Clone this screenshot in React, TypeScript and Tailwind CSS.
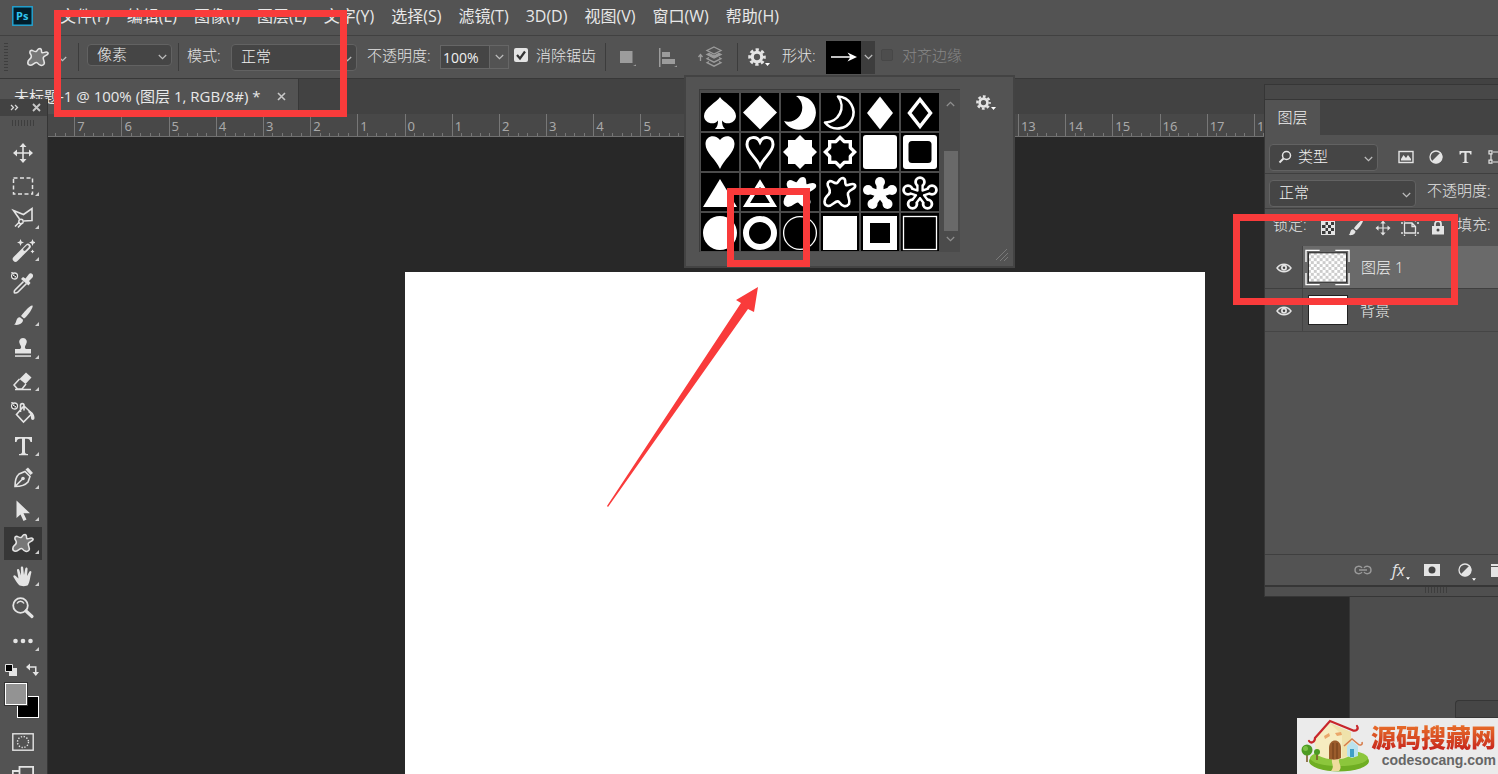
import { useState } from "react";
import type { ReactNode } from "react";

const menus = ["文件(F)", "编辑(E)", "图像(I)", "图层(L)", "文字(Y)", "选择(S)", "滤镜(T)", "3D(D)", "视图(V)", "窗口(W)", "帮助(H)"];

const rulerMarks = [8, 7, 6, 5, 4, 3, 2, 1, 0, 1, 2, 3, 4, 5, 6, 7, 8, 9, 10, 11, 12, 13, 14, 15, 16, 17, 18];

const BLOB = "M9 8C12 8 13 11 16 10C18 9 18 5 22 5C26 6 23 10 25 12C28 13 31 9 34 12C36 16 28 16 27 20C26 24 30 27 28 31C25 35 21 33 18 29C15 26 12 33 7 33C2 32 3 26 6 23C10 20 9 17 8 15C6 12 6 9 9 8Z";
const SPADE = "M19 4C22 9 35 15 35 23C35 30 25 33 21 27.500C21 32 22 34 24 36H14C16 34 17 32 17 27.500C13 33 3 30 3 23C3 15 16 9 19 4Z";
const HEART = "M19 36C15 26 4.500 20 4.500 11C4.500 2 15 1 19 7C23 1 33.500 2 33.500 11C33.500 20 23 26 19 36Z";
const MOON = "M15 3A17 17 0 1 1 3 28A14 14 0 0 0 15 3Z";
const ARMS = "M19 21V9M19 21L31 17M19 21L26.500 31M19 21L11.500 31M19 21L7 17";

const EightStar = ({ k }: { k: number }) => (
  <>
    <rect x={19 - 12 * k} y={19 - 12 * k} width={24 * k} height={24 * k} />
    <rect x={19 - 12 * k} y={19 - 12 * k} width={24 * k} height={24 * k} transform="rotate(45 19 19)" />
  </>
);

const Flower = ({ color, stem, bulb }: { color: string; stem: number; bulb: number }) => (
  <g fill={color}>
    <path d={ARMS} stroke={color} strokeWidth={stem} />
    <circle cx="19" cy="9" r={bulb} />
    <circle cx="31" cy="17" r={bulb} />
    <circle cx="26.500" cy="31" r={bulb} />
    <circle cx="11.500" cy="31" r={bulb} />
    <circle cx="7" cy="17" r={bulb} />
    <circle cx="19" cy="21" r={bulb} />
  </g>
);

const shapes: { name: string; art: ReactNode }[] = [
  { name: "黑桃", art: <path d={SPADE} /> },
  { name: "方块", art: <path d="M19 2.500L36 19.500L19 36.500L2 19.500Z" /> },
  { name: "新月", art: <path d={MOON} /> },
  { name: "新月边框", art: <path d="M17 3.500A16 16 0 1 1 4 29.500A16 16 0 0 0 17 3.500Z" fill="none" stroke="#fff" strokeWidth="2.600" strokeLinejoin="round" /> },
  { name: "菱形", art: <path d="M19 3.500L32 20L19 36.500L6 20Z" /> },
  { name: "菱形边框", art: <path d="M19 6.500L29.500 20L19 33.500L8.500 20Z" fill="none" stroke="#fff" strokeWidth="3.500" /> },
  { name: "红心", art: <path d={HEART} /> },
  { name: "红心边框", art: <path d="M19 33C15 24 6 19 6 11.500C6 3 16 2.500 19 9C22 2.500 32 3 32 11.500C32 19 23 24 19 33Z" fill="none" stroke="#fff" strokeWidth="3" /> },
  { name: "八角星", art: <EightStar k={1} /> },
  { name: "八角星边框", art: <><EightStar k={1} /><g fill="#000"><EightStar k={0.72} /></g></> },
  { name: "圆角方形", art: <rect x="2" y="2" width="34" height="34" rx="3" /> },
  { name: "圆角方形边框", art: <><rect x="2" y="2" width="34" height="34" rx="3" /><rect x="7.500" y="8" width="23" height="22" rx="3.500" fill="#000" /></> },
  { name: "三角形", art: <path d="M19 6L36 34H2Z" /> },
  { name: "三角形边框", art: <path d="M19 10L32.500 32H5.500Z" fill="none" stroke="#fff" strokeWidth="4" /> },
  { name: "污渍", art: <path d={BLOB} stroke="#fff" strokeWidth="2" /> },
  { name: "污渍边框", art: <path d={BLOB} fill="none" stroke="#fff" strokeWidth="2.600" /> },
  { name: "花", art: <Flower color="#fff" stem={7} bulb={5} /> },
  { name: "花边框", art: <><Flower color="#fff" stem={7.5} bulb={5.8} /><Flower color="#000" stem={2.8} bulb={3} /></> },
  { name: "圆形", art: <circle cx="19" cy="20" r="17" /> },
  { name: "圆环", art: <circle cx="19" cy="20" r="14" fill="none" stroke="#fff" strokeWidth="6" /> },
  { name: "细圆环", art: <circle cx="19" cy="20" r="16.400" fill="none" stroke="#fff" strokeWidth="1.300" /> },
  { name: "方形", art: <rect x="2" y="3" width="34" height="34" /> },
  { name: "方框", art: <rect x="5.500" y="6.500" width="27" height="27" fill="none" stroke="#fff" strokeWidth="7" /> },
  { name: "细方框", art: <rect x="2.500" y="3.500" width="33" height="33" fill="none" stroke="#fff" strokeWidth="1.300" /> },
];

const BlobIcon = () => (
  <path d={BLOB} transform="translate(-.5 .5) scale(.66 .6)" fill="#777" stroke="#e4e4e4" strokeWidth="2.400" />
);

const Dither = () => (
  <g>
    <circle cx="3.500" cy="5" r="3" fill="#333" stroke="#e4e4e4" strokeWidth="1.300" />
    <path d="M2 3.500h1.500v1.500h1.500v1.500h-1.500v-1.500h-1.500zM.3 1h1.500v1.500H.3z" />
  </g>
);

const tools: { name: string; art: ReactNode; more: boolean }[] = [
  { name: "移动工具", more: false, art: <path d="M12 2l3.500 4h-2.700v5.200h5.200V8.500L22 12l-4 3.500v-2.700h-5.200V18h2.700L12 22l-3.500-4h2.700v-5.200H6v2.700L2 12l4-3.500v2.700h5.200V6H8.500z" /> },
  { name: "矩形选框工具", more: true, art: <rect x="2.500" y="4" width="19" height="16" fill="none" stroke="#e4e4e4" strokeWidth="1.500" strokeDasharray="4 2.500" /> },
  { name: "套索工具", more: true, art: <><path d="M8.500 13L2.500 4.500L12.500 8.500L21 2.500V14.500L12.500 15M8.500 16L4 20.500M11 17L7 21.500" fill="none" stroke="#e4e4e4" strokeWidth="1.600" /><circle cx="10" cy="15.500" r="2.200" fill="none" stroke="#e4e4e4" strokeWidth="1.400" /></> },
  { name: "魔棒工具", more: true, art: <><path d="M4.500 20L17 7.500" stroke="#e4e4e4" strokeWidth="5.500" strokeLinecap="round" /><path d="M13.500 10.500L16.500 7.500" stroke="#555" strokeWidth="2.600" strokeLinecap="round" /><path d="M9.500 0l1 2.500L13 3.500l-2.500 1L9.500 7l-1-2.500L6 3.500l2.500-1zM21.500 0l1 2.500 2.500 1-2.500 1-1 2.500-1-2.500-2.500-1 2.500-1zM21.500 10.500l.7 1.300 1.300.7-1.300.7-.7 1.300-.7-1.300-1.300-.7 1.300-.7z" /></> },
  { name: "吸管工具", more: false, art: <><Dither /><path d="M12.500 10.500L4 19c-1 1-1 3 0 3s2 0 3-1l8.500-8.500" fill="none" stroke="#e4e4e4" strokeWidth="1.600" /><path d="M10 8l2-2 2.500 1.500L18 3c2-2 5.500 1 3.500 3.500L18 10l1.500 2-2 2.500z" /></> },
  { name: "画笔工具", more: true, art: <><path d="M21.500 1.500c1.500 1-5 11-8.500 13l-3-2.500c2-3 9.500-11.500 11.500-10.500z" /><path d="M9 13.200l3 2.600c0 4-5 6-9 4.700 3-1 1.500-7.500 6-7.300z" /></> },
  { name: "仿制图章工具", more: true, art: <><path d="M12 2a4 4 0 0 1 3 6.500c-1.500 2-1.500 4 0 4.500h5v4.500H4V13h5c1.500-.5 1.500-2.500 0-4.500A4 4 0 0 1 12 2z" /><path d="M4 19.300h16v1.500H4z" /></> },
  { name: "橡皮擦工具", more: true, art: <><path d="M15 3.500l5.500 5-6 6.500-6-5z" /><path d="M8.500 10L3 16l3.500 4H11l4-5M4 20.500h16" fill="none" stroke="#e4e4e4" strokeWidth="1.500" /></> },
  { name: "油漆桶工具", more: false, art: <><Dither /><path d="M13 5l8 7.500-8.500 8.500-7-7.500zM9.500 11V4.500c0-2.500 3.500-2.500 3.500 0v5" fill="none" stroke="#e4e4e4" strokeWidth="1.600" /><path d="M18 10c3 .5 5.500 3 5.500 7 0 2.500-3.500 2.500-3.500 0 0-3-1-5-3-6z" /></> },
  { name: "文字工具", more: true, art: <path d="M4 3h17v5h-1.500c-.5-2.500-1.500-3.200-3.500-3.200h-2V18c0 1.500 1 2 3 2v1.200H8V20c2 0 3-.5 3-2V4.800H9C7 4.800 6 5.500 5.500 8H4z" /> },
  { name: "钢笔工具", more: true, art: <><path d="M4 20.500c0-5 1-10 4-12.500l6-2.500 5 5L17 16c-2.500 3-7.500 4.500-13 4.500zM4 20.500l7-7" fill="none" stroke="#e4e4e4" strokeWidth="1.600" /><circle cx="12" cy="12.500" r="1.800" /><path d="M14.500 3.500L17 1.500l5 5.500-2.500 2z" /></> },
  { name: "路径选择工具", more: true, art: <path d="M5.500 1.500V19l4-3.500 3 6.500 3-1.400-3-6.300H19z" /> },
  { name: "自定形状工具", more: true, art: <BlobIcon /> },
  { name: "抓手工具", more: true, art: <path d="M8 21c-2-2-4-5.500-5.500-8-.8-1.500 1-2.500 2-1.300L7.500 14.500 6 6.500c-.3-1.800 1.900-2.100 2.300-.4L10 11.500 9.800 3.800c0-1.900 2.300-1.900 2.400 0L13 11l1.300-6.500c.4-1.700 2.500-1.300 2.300.5L16 12l2.300-4.200c.8-1.500 2.600-.6 2 1C19 13 19 18 17 21c-1 1.500-7.500 1.500-9 0z" /> },
  { name: "缩放工具", more: false, art: <><circle cx="9.500" cy="9.500" r="7.300" fill="none" stroke="#e4e4e4" strokeWidth="1.800" /><path d="M6 7.500c1.500-3 5.500-3 7 0" fill="none" stroke="#e4e4e4" strokeWidth="1.500" /><path d="M15 15l6 5.500" stroke="#e4e4e4" strokeWidth="3.200" strokeLinecap="round" /></> },
  { name: "编辑工具栏", more: true, art: <><circle cx="4.500" cy="12" r="2.300" /><circle cx="12" cy="12" r="2.300" /><circle cx="19.500" cy="12" r="2.300" /></> },
];

const Chevron = ({ className = "" }: { className?: string }) => (
  <svg className={`pointer-events-none ${className}`} width="9" height="6" viewBox="0 0 9 6" fill="none" stroke="#bdbdbd" strokeWidth="1.200">
    <path d="M.8 1l3.700 3.700L8.200 1" />
  </svg>
);

const Gear = ({ size }: { size: number }) => (
  <svg width={size} height={size} viewBox="0 0 16 16" fill="none" stroke="#e4e4e4">
    <circle cx="8" cy="8" r="4.200" strokeWidth="2.800" />
    <circle cx="8" cy="8" r="6.500" strokeWidth="2.600" strokeDasharray="2.900 2.205" strokeDashoffset="1.450" />
  </svg>
);

const Combo = ({ label, value, className, pad }: { label: string; value: string; className: string; pad: string }) => (
  <div className={`grid items-center rounded-sm border border-[#626262] bg-[#454545] ${className}`}>
    <select aria-label={label} className={`col-start-1 row-start-1 h-full w-full appearance-none bg-transparent pb-0.5 text-[15px] leading-none text-[#f0f0f0] outline-none ${pad}`}>
      <option>{value}</option>
    </select>
    <Chevron className="col-start-1 row-start-1 mt-1 mr-1 justify-self-end" />
  </div>
);

const Separator = () => <div className="h-7 w-px bg-[#3c3c3c]" />;

const OptionsBar = () => {
  const [antialias, setAntialias] = useState<boolean>(true);
  const [opacity, setOpacity] = useState<string>("100%");

  return (
    <div className="flex h-[43px] shrink-0 items-center border-b border-[#383838] bg-[#535353] pl-1 text-[15px] font-light whitespace-nowrap text-[#e4e4e4] [&>*]:shrink-0">
      <div className="h-7 w-1 bg-[repeating-linear-gradient(#3e3e3e_0_1px,transparent_1px_3px)]" />
      <button aria-label="当前工具" className="ml-[18px] w-6">
        <svg width="24" height="24" viewBox="0 0 24 24"><BlobIcon /></svg>
      </button>
      <Chevron className="mt-1 ml-2" />
      <div className="ml-[11px]"><Separator /></div>
      <Combo label="工具模式" value="像素" className="ml-2 mb-1 h-[22px] w-[85px]" pad="pl-[9px]" />
      <div className="ml-1.5"><Separator /></div>
      <span className="mb-1 ml-2 w-11">模式:</span>
      <Combo label="模式" value="正常" className="h-[27px] w-[126px]" pad="pl-[9px]" />
      <label htmlFor="opacity" className="mb-1 ml-2.5 w-[73px]">不透明度:</label>
      <input
        id="opacity"
        className="h-6 w-[50px] border border-[#666] bg-[#454545] pl-0.5 text-sm font-normal text-[#f0f0f0] outline-none"
        value={opacity}
        onChange={(e) => setOpacity(e.target.value)} />
      <button aria-label="不透明度滑块" className="flex h-6 w-[19px] items-center justify-center border border-l-0 border-[#666]">
        <Chevron />
      </button>
      <label className="mb-1 ml-[5px] flex items-center gap-2">
        <span className="grid">
          <input
            type="checkbox"
            className="col-start-1 row-start-1 size-3.5 appearance-none rounded-xs bg-[#e4e4e4]"
            checked={antialias}
            onChange={(e) => setAntialias(e.target.checked)} />
          {antialias && (
            <svg className="pointer-events-none col-start-1 row-start-1" width="14" height="14" viewBox="0 0 14 14" fill="none" stroke="#333" strokeWidth="2.200">
              <path d="M3 7l3 3.500L11 3.500" />
            </svg>
          )}
        </span>
        <span className="w-[60px]">消除锯齿</span>
      </label>
      <div className="ml-[9px]"><Separator /></div>
      <button aria-label="路径操作" className="ml-3 w-[22px]">
        <svg width="22" height="22" viewBox="0 0 22 22" fill="#9c9c9c">
          <path d="M2 5h12.500v12H2z" /><path d="M15 20h3v-1.500z" />
        </svg>
      </button>
      <button aria-label="路径对齐方式" className="ml-[17px] w-[22px]">
        <svg width="22" height="22" viewBox="0 0 22 22" fill="#9c9c9c">
          <path d="M2 2h1.500v19H2zM5 6h8v5H5zM5 13h13v5H5z" /><path d="M17 21h3v-1.500z" />
        </svg>
      </button>
      <button aria-label="路径排列方式" className="ml-[18px] w-[26px]">
        <svg width="26" height="22" viewBox="0 0 26 22" fill="none" stroke="#9c9c9c" strokeWidth="1.300">
          <path d="M3.500 15V9M1.500 11l2-2.500 2 2.500M17 1l7 3.500-7 3.500-7-3.500z" />
          <path d="M10 8.500l7 3.500 7-3.500-2-1-5 2.500-5-2.500z" fill="#9c9c9c" />
          <path d="M12 11.500l-2 1.200 7 3.500 7-3.500-2-1.200M12 15.500l-2 1.200 7 3.500 7-3.500-2-1.200" />
        </svg>
      </button>
      <div className="ml-3.5"><Separator /></div>
      <button aria-label="路径选项" className="ml-2.5 flex w-[22px] items-end">
        <Gear size={18} />
        <svg className="-ml-px" width="5" height="3" viewBox="0 0 5 3"><path d="M0 0h5L2.500 3z" fill="#fff" /></svg>
      </button>
      <span className="mb-1 ml-3 w-11">形状:</span>
      <button aria-label="当前形状" className="flex h-[33px] w-[35px] items-center justify-center bg-black">
        <svg width="28" height="12" viewBox="0 0 28 12" fill="#fff">
          <path d="M1 5.200h19L17.500 1.500 27 6l-9.500 4.500L20 6.800H1z" />
        </svg>
      </button>
      <button aria-label="打开形状拾色器" className="flex h-[33px] w-3.5 items-center justify-center bg-[#3d3d3d]">
        <Chevron />
      </button>
      <label className="mb-1 ml-1.5 flex items-center gap-[9px] text-[#888]">
        <input type="checkbox" disabled className="size-3 appearance-none rounded-xs border border-[#474747] bg-[#4d4d4d]" />
        对齐边缘
      </label>
    </div>
  );
};

const Ruler = () => (
  <div className="flex h-[23px] shrink-0 overflow-hidden border-b border-[#707070] bg-[#484848] pl-[27px]">
    <div className="flex w-[1274px] shrink-0">
      {rulerMarks.map((mark, i) => (
        <div key={i} className="grid flex-1 border-l border-[#777]">
          <span className="col-start-1 row-start-1 mt-1 pl-0.5 font-['Noto_Sans'] text-[13px] leading-4 text-[#a8a8a8]">{mark}</span>
          <div className="col-start-1 row-start-1 flex h-[3px] self-end">
            <i className="flex-1" />
            <i className="flex-1 border-l border-[#777]" />
            <i className="flex-1 border-l border-[#777]" />
            <i className="flex-1 border-l border-[#777]" />
            <i className="flex-1 border-l border-[#777]" />
          </div>
        </div>
      ))}
    </div>
  </div>
);

const Toolbar = () => {
  const [active, setActive] = useState<string>("自定形状工具");

  return (
    <div className="absolute top-[99px] bottom-0 left-0 flex w-12 flex-col overflow-hidden border-r border-[#353535] bg-[#535353]">
      <div className="flex h-[17px] shrink-0 items-center justify-between bg-[#424242] pr-1.5 pl-[10px]">
        <button aria-label="展开面板">
          <svg width="9" height="7" viewBox="0 0 9 7" fill="none" stroke="#d8d8d8" strokeWidth="1.300"><path d="M1 1l2.500 2.500L1 6M5 1l2.500 2.500L5 6" /></svg>
        </button>
        <button aria-label="关闭面板">
          <svg width="9" height="9" viewBox="0 0 9 9" stroke="#c8c8c8" strokeWidth="1.800"><path d="M1 1l7 7M8 1L1 8" /></svg>
        </button>
      </div>
      <div className="mt-1 ml-3 h-1.5 w-6 shrink-0 bg-[repeating-linear-gradient(90deg,#3e3e3e_0_1px,transparent_1px_3px)]" />
      <div className="mt-[11px] ml-1 flex h-[520px] w-[38px] shrink-0 flex-col">
        {tools.map((tool) => (
          <button
            key={tool.name}
            aria-label={tool.name}
            onClick={() => setActive(tool.name)}
            className={`grid flex-1 place-items-center ${active === tool.name ? "bg-[#373737]" : ""}`}>
            <svg className="col-start-1 row-start-1" width="24" height="24" viewBox="0 0 24 24" fill="#e4e4e4">{tool.art}</svg>
            {tool.more && (
              <svg className="col-start-1 row-start-1 mr-[3px] mb-1.5 self-end justify-self-end" width="4" height="4" viewBox="0 0 4 4"><path d="M4 0v4H0z" fill="#cfcfcf" /></svg>
            )}
          </button>
        ))}
      </div>
      <div className="mt-1.5 flex shrink-0 gap-2 pl-1">
        <button aria-label="默认颜色">
          <svg width="14" height="13" viewBox="0 0 14 13"><path d="M5 5h8v8H5z" fill="#e4e4e4" /><path d="M1.500 1.500h7v7h-7z" fill="#000" stroke="#e4e4e4" /></svg>
        </button>
        <button aria-label="切换颜色">
          <svg width="14" height="13" viewBox="0 0 14 13" fill="#e4e4e4"><path d="M0 4l4-3.500v2.700h6.500V9H13l-3.200 4L6.500 9H9V4.800H4v2.700z" /></svg>
        </button>
      </div>
      <div className="mt-[7px] ml-[5px] grid h-[35px] w-[34px] shrink-0">
        <button aria-label="背景色" className="col-start-1 row-start-1 size-[22px] self-end justify-self-end border border-white bg-black" />
        <button aria-label="前景色" className="col-start-1 row-start-1 size-[22px] border border-white bg-[#939393] outline outline-[#333]" />
      </div>
      <button aria-label="快速蒙版" className="mt-[15px] ml-3 w-[22px] shrink-0">
        <svg width="22" height="18" viewBox="0 0 22 18" fill="none" stroke="#e4e4e4">
          <rect x=".8" y=".8" width="20.400" height="16.400" strokeWidth="1.400" />
          <circle cx="11" cy="9" r="5.500" strokeWidth="1.400" strokeDasharray="1.300 1.580" />
        </svg>
      </button>
      <button aria-label="屏幕模式" className="mt-[15px] ml-3 w-[22px] shrink-0">
        <svg width="22" height="16" viewBox="0 0 22 16" fill="none" stroke="#e4e4e4" strokeWidth="1.800">
          <path d="M7.500 .9h13.600v12H7.500zM7.500 5H.8v9h10" />
        </svg>
      </button>
    </div>
  );
};

const ShapePicker = () => {
  const [picked, setPicked] = useState<string>("");

  return (
    <div className="absolute top-[75px] left-[684px] flex h-[193px] w-[331px] border-2 border-[#434343] bg-[#535353] pt-3 pl-[13px]">
      <div className="flex h-[163px] w-[261px] shrink-0 border-t border-l border-[#3c3c3c] bg-[#4b4b4b] pt-[3px] pl-px">
        <div className="grid w-[238px] grid-cols-6 content-start gap-0.5">
          {shapes.map((shape) => (
            <button
              key={shape.name}
              aria-label={shape.name}
              aria-pressed={picked === shape.name}
              onClick={() => setPicked(shape.name)}
              className="bg-black">
              <svg className="block h-[38px] w-full" viewBox="0 0 38 38" fill="#fff">{shape.art}</svg>
            </button>
          ))}
        </div>
        <div className="ml-0.5 flex flex-1 flex-col items-center pt-2 pb-2.5">
          <Chevron className="rotate-180 opacity-60" />
          <div className="mt-auto mb-[5px] h-20 w-3.5 bg-[#696969]" />
          <Chevron className="opacity-60" />
        </div>
      </div>
      <div className="flex flex-1 flex-col justify-between pr-1 pb-1">
        <button aria-label="拾色器菜单" className="mt-1.5 ml-4 flex items-end">
          <Gear size={15} />
          <svg width="5" height="3" viewBox="0 0 5 3"><path d="M0 0h5L2.500 3z" fill="#fff" /></svg>
        </button>
        <svg className="self-end" width="14" height="14" viewBox="0 0 14 14" stroke="#7a7a7a"><path d="M1 12L12 1M5 13l8-8M9 13l4-4" /></svg>
      </div>
    </div>
  );
};

const AdjustIcon = () => (
  <svg width="14" height="14" viewBox="0 0 14 14">
    <circle cx="7" cy="7" r="6" fill="none" stroke="#e4e4e4" strokeWidth="1.300" />
    <path d="M11.500 2.500A6.300 6.300 0 0 1 2.500 11.500z" fill="#e4e4e4" />
  </svg>
);

const Eye = () => (
  <svg width="16" height="10" viewBox="0 0 16 10">
    <path d="M1 5c3.500-5 10.500-5 14 0-3.500 5-10.500 5-14 0z" fill="#555" stroke="#e4e4e4" strokeWidth="1.400" />
    <circle cx="8" cy="4.800" r="3" fill="#e4e4e4" />
    <circle cx="8" cy="4.800" r="1.200" fill="#444" />
  </svg>
);

const LayersPanel = () => (
  <div className="absolute top-[84px] right-0 flex h-[513px] w-[234px] flex-col overflow-hidden border-t border-l border-[#363636] bg-[#535353] text-[15px] font-light whitespace-nowrap text-[#e4e4e4]">
    <div className="h-[15px] shrink-0 border-b border-[#363636] bg-[#484848]" />
    <div className="flex h-[35px] shrink-0 bg-[#434343]">
      <button className="w-[55px] bg-[#535353] text-[#f0f0f0]">图层</button>
    </div>
    <div className="flex h-[39px] shrink-0 items-center border-b border-[#3f3f3f] pt-1.5 pl-1 [&>*]:shrink-0">
      <div className="grid h-[27px] w-[109px] items-center rounded-sm border border-[#626262] bg-[#454545]">
        <select aria-label="图层筛选" className="col-start-1 row-start-1 h-full w-full appearance-none bg-transparent pb-0.5 pl-7 text-[15px] leading-none text-[#f0f0f0] outline-none">
          <option>类型</option>
        </select>
        <svg className="pointer-events-none col-start-1 row-start-1 ml-2" width="14" height="14" viewBox="0 0 14 14" fill="none" stroke="#e4e4e4">
          <circle cx="8.500" cy="5.500" r="4" strokeWidth="1.500" /><path d="M5.500 8.500L1.500 12.500" strokeWidth="2" />
        </svg>
        <Chevron className="col-start-1 row-start-1 mt-1 mr-1 justify-self-end" />
      </div>
      <button aria-label="像素图层" className="ml-5">
        <svg width="16" height="14" viewBox="0 0 16 14"><rect x="1" y="1.500" width="14" height="11" fill="none" stroke="#e4e4e4" strokeWidth="1.400" /><path d="M3 10.500V9l2.500-4L8 8l2-3 3 4v1.500z" fill="#e4e4e4" /></svg>
      </button>
      <button aria-label="调整图层" className="ml-[15px]"><AdjustIcon /></button>
      <button aria-label="文字图层" className="ml-4">
        <svg width="13" height="14" viewBox="0 0 13 14" fill="#e4e4e4"><path d="M.5 1h12v3.500h-1.200c-.3-1.300-.8-1.700-2.300-1.700H7.600V11c0 .9.600 1.200 1.800 1.200v.8H3.600v-.8c1.200 0 1.800-.3 1.800-1.200V2.800H4c-1.500 0-2 .4-2.300 1.700H.5z" /></svg>
      </button>
      <button aria-label="形状图层" className="ml-4">
        <svg width="16" height="14" viewBox="0 0 16 14" fill="none" stroke="#e4e4e4" strokeWidth="1.200"><path d="M3 3.500v7M5 2h6M5 12h6M1 .8h3v3H1zM1 10.200h3v3H1zM12 .8h3v3h-3zM12 10.200h3v3h-3z" /></svg>
      </button>
    </div>
    <div className="flex h-[35px] shrink-0 items-center border-b border-[#3f3f3f] pl-1 [&>*]:shrink-0">
      <Combo label="混合模式" value="正常" className="mt-1 h-[27px] w-[147px]" pad="pl-[9px]" />
      <span className="mb-0.5 ml-[11px]">不透明度:</span>
    </div>
    <div className="flex h-[37px] shrink-0 items-center pl-2 [&>*]:shrink-0">
      <span className="mb-1.5 w-12">锁定:</span>
      <button aria-label="锁定透明像素">
        <svg width="14" height="14" viewBox="0 0 14 14"><path d="M0 0h14v14H0z" fill="#e4e4e4" /><path d="M4.500 1H7v3H4.500zM10 1h3v3h-3zM1 4h3.500v3H1zM7 4h3v3H7zM4.500 7H7v3H4.500zM10 7h3v3h-3zM1 10h3.500v3H1zM7 10h3v3H7z" fill="#3a3a3a" /></svg>
      </button>
      <button aria-label="锁定图像像素" className="ml-3">
        <svg width="17" height="17" viewBox="1 0 22 22" fill="#e4e4e4"><path d="M21.500 1.500c1.500 1-5 11-8.500 13l-3-2.500c2-3 9.500-11.500 11.500-10.500z" /><path d="M9 13.200l3 2.600c0 4-5 6-9 4.700 3-1 1.500-7.500 6-7.300z" /></svg>
      </button>
      <button aria-label="锁定位置" className="ml-2.5">
        <svg width="18" height="18" viewBox="0 0 24 24" fill="#e4e4e4">{tools[0].art}</svg>
      </button>
      <button aria-label="防止自动嵌套" className="ml-[9px]">
        <svg width="18" height="16" viewBox="0 0 18 16" fill="none" stroke="#e4e4e4" strokeWidth="1.300"><path d="M3.500 3V13H14.500V6.500L11 3zM11 3v3.500h3.500M0 3h2M16 3h2M0 13h2M16 13h2M3.500 0v1.500M14.500 0v1.500M3.500 14.500V16M14.500 14.500V16" /></svg>
      </button>
      <button aria-label="锁定全部" className="ml-3">
        <svg width="14" height="15" viewBox="0 0 14 15"><path d="M1 6h12v8.500H1z" fill="#e4e4e4" /><path d="M4 6V4a3 3 0 0 1 6 0v2" fill="none" stroke="#e4e4e4" strokeWidth="1.800" /><circle cx="7" cy="10" r="1.500" fill="#444" /></svg>
      </button>
      <span className="mb-1.5 ml-3">填充:</span>
    </div>
    <div className="flex h-[43px] shrink-0 border-b border-[#3f3f3f]">
      <button aria-label="图层 1 可见性" className="flex w-[38px] items-center justify-center border-r border-[#444] pt-0.5"><Eye /></button>
      <button className="flex flex-1 items-center gap-[11px] bg-[#6a6a6a] pl-0.5 text-[#f0f0f0]">
        <svg width="45" height="37" viewBox="0 0 46 37">
          <defs>
            <pattern id="checker" width="6" height="6" patternUnits="userSpaceOnUse">
              <path d="M0 0h6v6H0z" fill="#fff" /><path d="M0 0h3v3H0zM3 3h3v3H3z" fill="#ccc" />
            </pattern>
          </defs>
          <rect x="3.500" y="3.500" width="39" height="30" fill="url(#checker)" stroke="#222" />
          <path d="M15 1H1v12M31 1h14v12M15 36H1V24M31 36h14V24" fill="none" stroke="#fff" strokeWidth="1.400" />
        </svg>
        图层 1
      </button>
    </div>
    <div className="flex h-[43px] shrink-0 border-b border-[#454545]">
      <button aria-label="背景 可见性" className="flex w-[38px] items-center justify-center border-r border-[#444] pt-0.5"><Eye /></button>
      <button className="flex flex-1 items-center gap-3 pl-[5px] text-[#f0f0f0]">
        <span className="h-[30px] w-10 border border-[#222] bg-white" />
        背景
      </button>
    </div>
    <div className="flex-1" />
    <div className="flex h-[31px] shrink-0 items-center border-t border-[#3f3f3f] pl-[89px] [&>*]:shrink-0">
      <button aria-label="链接图层">
        <svg width="18" height="10" viewBox="0 0 18 10" fill="none" stroke="#999" strokeWidth="1.400"><path d="M8 3C6.500.5 1 .5 1 5s5.500 4.500 7 2M10 3c1.500-2.500 7-2.500 7 2s-5.500 4.500-7 2M5 5h8" /></svg>
      </button>
      <button aria-label="图层样式" className="ml-5 flex items-end font-['Open_Sans'] text-base leading-5 font-normal italic">
        fx
        <svg className="ml-px" width="4" height="3" viewBox="0 0 5 3"><path d="M0 0h5L2.500 3z" fill="#fff" /></svg>
      </button>
      <button aria-label="图层蒙版" className="ml-3.5">
        <svg width="16" height="12" viewBox="0 0 16 12"><path d="M0 0h16v12H0z" fill="#e4e4e4" /><circle cx="8" cy="6" r="3.500" fill="#444" /></svg>
      </button>
      <button aria-label="新建调整图层" className="ml-[18px] flex items-end">
        <AdjustIcon />
        <svg className="-mb-1" width="4" height="3" viewBox="0 0 5 3"><path d="M0 0h5L2.500 3z" fill="#fff" /></svg>
      </button>
      <button aria-label="新建组" className="ml-[15px]">
        <svg width="16" height="13" viewBox="0 0 16 13" fill="#e4e4e4"><path d="M0 0h8v2H0zM0 3h16v10H0z" /></svg>
      </button>
    </div>
    <div className="flex h-3 shrink-0 justify-center border-t-2 border-b border-t-[#363636] border-b-[#363636] bg-[#4f4f4f] pl-[110px]">
      <div className="h-1.5 w-6 bg-[repeating-linear-gradient(90deg,#3e3e3e_0_1px,transparent_1px_3px)]" />
    </div>
  </div>
);

const Watermark = () => (
  <div className="absolute right-0 bottom-0 flex h-14 w-[201px] bg-[#ebebeb]">
    <svg className="shrink-0" width="74" height="56" viewBox="0 0 74 56">
      <ellipse cx="42" cy="43" rx="30" ry="10.500" fill="#6fae23" />
      <ellipse cx="42" cy="40" rx="29" ry="8" fill="#8cc63c" />
      <path d="M34 53c4-5 0-7 1-12h7c-1 5 4 7 0 12z" fill="#eedc9c" />
      <path d="M17 22L33 5l21 9v23c-9 6-22 6-34 0z" fill="#f6ecc0" />
      <path d="M33 5l21 9v23l-9 3V17z" fill="#efe2ab" />
      <path d="M12 23c2 3 6 1 6-3L33 3l22 9c4 2 7-1 5-4" fill="none" stroke="#c8262b" strokeWidth="2.200" strokeLinecap="round" />
      <path d="M32 41V30c0-10 12-10 12 0v10c-3 2-9 2-12 1z" fill="#9b5c2c" />
      <path d="M36 41V25M40 41V25" stroke="#6f3c18" />
      <path d="M27 18l5-3 1 3-5 3zM38 15l6-1 1 3-5 1z" fill="#eaa76a" />
      <path d="M50 28l5-5 6 5v10l-6 2-5-2z" fill="#b9e2ee" />
      <path d="M53 31h4v8h-4z" fill="#3f9fc6" />
      <path d="M47 28l8-7 6 5c2 2 5 1 4-2" fill="none" stroke="#d67c4b" strokeWidth="1.500" />
      <path d="M10 34v10M20 36v6" stroke="#7a5a2a" strokeWidth="1.600" />
      <circle cx="10" cy="32" r="5.500" fill="#4c9a22" /><circle cx="8.500" cy="30.500" r="2.500" fill="#7cc043" />
      <circle cx="20" cy="34" r="3" fill="#4c9a22" />
    </svg>
    <a href="#codesocang" className="flex flex-1 flex-col items-end pt-0.5 pr-1 whitespace-nowrap">
      <span className="bg-linear-to-b from-[#ee7a2c] to-[#c4161c] bg-clip-text font-['Noto_Sans_CJK_SC',sans-serif] text-[25px] leading-8 font-black text-transparent">源码搜藏网</span>
      <span className="font-['Liberation_Sans',sans-serif] text-sm leading-4 font-bold text-[#666]">codesocang.com</span>
    </a>
  </div>
);

const App = () => {
  return (
    <div className="relative flex h-screen flex-col overflow-hidden bg-[#282828] font-['Open_Sans','Noto_Sans_CJK_SC',sans-serif]">
      <nav className="flex h-9 shrink-0 items-center border-b border-[#414141] bg-[#535353] pl-3 whitespace-nowrap">
        <svg className="mb-1 shrink-0" width="21" height="20" viewBox="0 0 21 20">
          <rect x=".8" y=".8" width="19.400" height="18.400" fill="#001d2b" stroke="#22a7d8" strokeWidth="1.400" />
          <text x="4" y="14" fontSize="11" fontWeight="700" fill="#31c5f0" fontFamily="Open Sans">Ps</text>
        </svg>
        <div className="mb-1 ml-[27px] flex gap-[17px] text-base text-[#e8e8e8]">
          {menus.map((menu) => (
            <button key={menu}>{menu}</button>
          ))}
        </div>
      </nav>
      <OptionsBar />
      <div className="flex h-[35px] shrink-0 bg-[#424242]">
        <div className="flex w-[299px] items-center border-r border-[#383838] bg-[#535353] pl-3.5 text-[15px] whitespace-nowrap text-[#e8e8e8]">
          <button>未标题-1 @ 100% (图层 1, RGB/8#) *</button>
          <button aria-label="关闭文档" className="ml-4">
            <svg width="9" height="9" viewBox="0 0 9 9" stroke="#c8c8c8" strokeWidth="1.600"><path d="M1 1l7 7M8 1L1 8" /></svg>
          </button>
        </div>
      </div>
      <Ruler />
      <main className="flex min-h-0 flex-1 pt-[135px] pl-[405px]">
        <div className="w-[800px] shrink-0 bg-white" />
      </main>

      <Toolbar />
      <ShapePicker />
      <div className="absolute top-[597px] right-0 bottom-0 flex w-[149px] items-end justify-end border-l border-[#363636] bg-[#4d4d4d]">
        <div className="h-[74px] w-[43px] rounded-tl border-t border-l border-[#363636] bg-[#464646] pt-4">
          <div className="h-full border-t border-[#363636]" />
        </div>
      </div>
      <LayersPanel />
      <Watermark />

      {/* tutorial marks */}
      <div className="pointer-events-none absolute top-[10px] left-[54px] h-[107px] w-[293px] border-7 border-[#f93b3b]" />
      <div className="pointer-events-none absolute top-[188px] left-[727px] h-[79px] w-[83px] border-7 border-[#f93b3b]" />
      <div className="pointer-events-none absolute top-[214px] right-10 h-[91px] w-[225px] border-7 border-[#f93b3b]" />
      <svg className="pointer-events-none absolute top-[280px] left-[600px]" width="170" height="235" viewBox="0 0 170 235">
        <path d="M158 7L154 32L148 29L8 227L7 226L141 23L136 20Z" fill="#f93b3b" />
      </svg>
    </div>
  );
};

export default App;
